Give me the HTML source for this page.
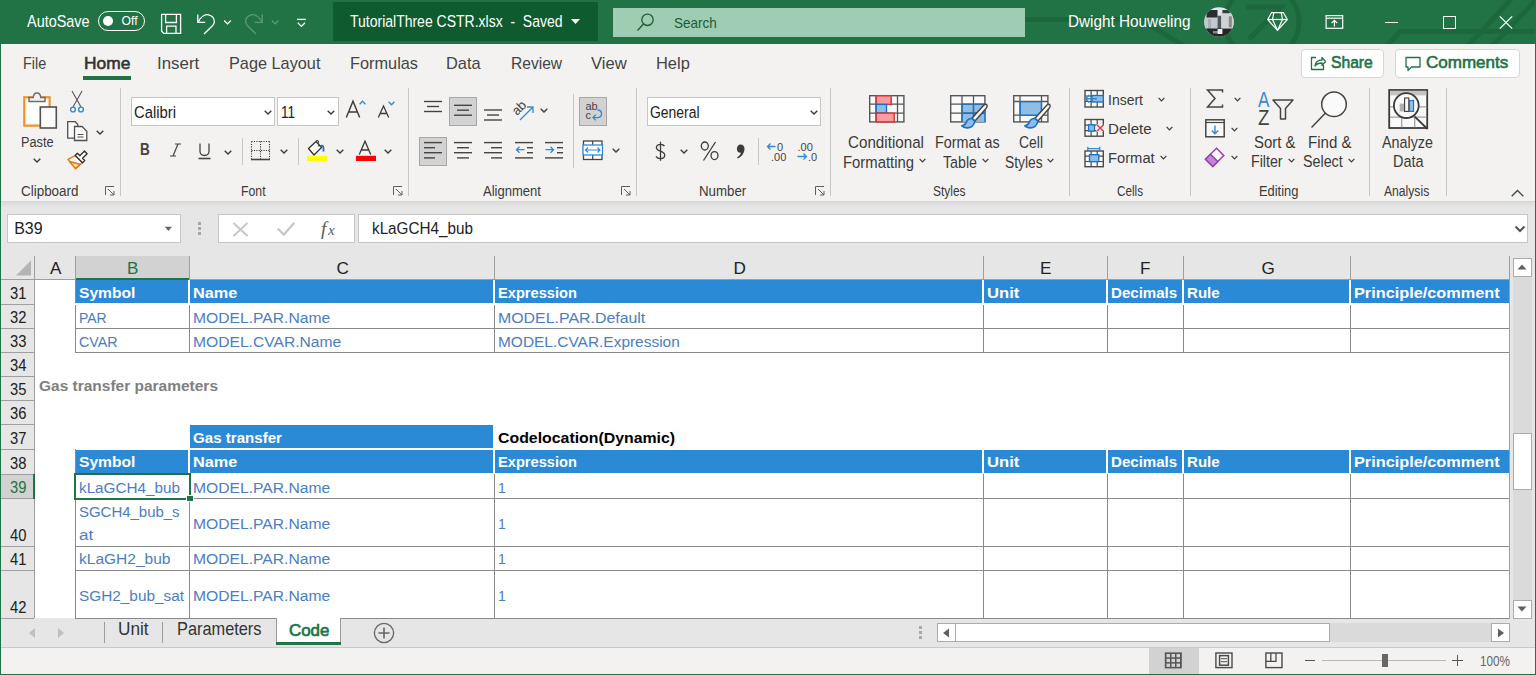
<!DOCTYPE html>
<html><head><meta charset="utf-8"><style>
html,body{margin:0;padding:0;width:1536px;height:675px;overflow:hidden;background:#fff;}
body{position:relative;font-family:"Liberation Sans", sans-serif;}
.t{position:absolute;white-space:pre;line-height:1;font-family:"Liberation Sans", sans-serif;}
svg{position:absolute;overflow:visible;}
</style></head><body>
<div style="position:absolute;left:0px;top:0px;width:1536px;height:675px;background:#f3f2f1"></div><div style="position:absolute;left:0px;top:0px;width:1536px;height:44px;background:#217346"></div><div style="position:absolute;left:1px;top:44px;width:1534px;height:157px;background:#f3f2f1"></div><div style="position:absolute;left:1px;top:201px;width:1534px;height:446px;background:#e6e6e6"></div><div style="position:absolute;left:1px;top:201px;width:1534px;height:6px;background:linear-gradient(#d6d6d6,#e6e6e6)"></div><div style="position:absolute;left:0px;top:44px;width:1px;height:631px;background:#217346"></div><div style="position:absolute;left:1535px;top:44px;width:1px;height:631px;background:#217346"></div><div style="position:absolute;left:0px;top:674px;width:1536px;height:1px;background:#217346"></div><div style="position:absolute;left:83px;top:76px;width:48px;height:4px;background:#217346"></div><div style="position:absolute;left:7px;top:214px;width:174px;height:29px;background:#fff;box-sizing:border-box;border:1px solid #c6c6c6"></div><div style="position:absolute;left:218px;top:214px;width:137px;height:29px;background:#fff;box-sizing:border-box;border:1px solid #c6c6c6"></div><div style="position:absolute;left:358px;top:214px;width:1170px;height:29px;background:#fff;box-sizing:border-box;border:1px solid #c6c6c6"></div><div style="position:absolute;left:35px;top:280px;width:1474px;height:338px;background:#fff"></div><div style="position:absolute;left:76px;top:256px;width:113px;height:23px;background:#d2d2d2"></div><div style="position:absolute;left:1px;top:475px;width:32px;height:23px;background:#d2d2d2"></div><div style="position:absolute;left:34px;top:256px;width:1px;height:24px;background:#9e9e9e"></div><div style="position:absolute;left:75px;top:256px;width:1px;height:24px;background:#9e9e9e"></div><div style="position:absolute;left:189px;top:256px;width:1px;height:24px;background:#9e9e9e"></div><div style="position:absolute;left:494px;top:256px;width:1px;height:24px;background:#9e9e9e"></div><div style="position:absolute;left:983px;top:256px;width:1px;height:24px;background:#9e9e9e"></div><div style="position:absolute;left:1107px;top:256px;width:1px;height:24px;background:#9e9e9e"></div><div style="position:absolute;left:1183px;top:256px;width:1px;height:24px;background:#9e9e9e"></div><div style="position:absolute;left:1350px;top:256px;width:1px;height:24px;background:#9e9e9e"></div><div style="position:absolute;left:1509px;top:256px;width:1px;height:24px;background:#9e9e9e"></div><div style="position:absolute;left:1px;top:279px;width:1509px;height:1px;background:#9e9e9e"></div><div style="position:absolute;left:34px;top:256px;width:1px;height:362px;background:#9e9e9e"></div><div style="position:absolute;left:1px;top:304px;width:33px;height:1px;background:#9e9e9e"></div><div style="position:absolute;left:1px;top:328px;width:33px;height:1px;background:#9e9e9e"></div><div style="position:absolute;left:1px;top:352px;width:33px;height:1px;background:#9e9e9e"></div><div style="position:absolute;left:1px;top:376px;width:33px;height:1px;background:#9e9e9e"></div><div style="position:absolute;left:1px;top:400px;width:33px;height:1px;background:#9e9e9e"></div><div style="position:absolute;left:1px;top:424px;width:33px;height:1px;background:#9e9e9e"></div><div style="position:absolute;left:1px;top:449px;width:33px;height:1px;background:#9e9e9e"></div><div style="position:absolute;left:1px;top:474px;width:33px;height:1px;background:#9e9e9e"></div><div style="position:absolute;left:1px;top:498px;width:33px;height:1px;background:#9e9e9e"></div><div style="position:absolute;left:1px;top:546px;width:33px;height:1px;background:#9e9e9e"></div><div style="position:absolute;left:1px;top:570px;width:33px;height:1px;background:#9e9e9e"></div><div style="position:absolute;left:1px;top:618px;width:33px;height:1px;background:#9e9e9e"></div><div style="position:absolute;left:76px;top:278px;width:113px;height:2px;background:#217346"></div><div style="position:absolute;left:33px;top:474px;width:2px;height:25px;background:#217346"></div><div style="position:absolute;left:75px;top:280px;width:1px;height:23px;background:#8a8a8a"></div><div style="position:absolute;left:76px;top:280px;width:112px;height:23px;background:#2b8ad6"></div><div style="position:absolute;left:190px;top:280px;width:303px;height:23px;background:#2b8ad6"></div><div style="position:absolute;left:495px;top:280px;width:487px;height:23px;background:#2b8ad6"></div><div style="position:absolute;left:984px;top:280px;width:122px;height:23px;background:#2b8ad6"></div><div style="position:absolute;left:1108px;top:280px;width:74px;height:23px;background:#2b8ad6"></div><div style="position:absolute;left:1184px;top:280px;width:165px;height:23px;background:#2b8ad6"></div><div style="position:absolute;left:1351px;top:280px;width:158px;height:23px;background:#2b8ad6"></div><div style="position:absolute;left:75px;top:305px;width:1px;height:48px;background:#8a8a8a"></div><div style="position:absolute;left:189px;top:305px;width:1px;height:48px;background:#8a8a8a"></div><div style="position:absolute;left:494px;top:305px;width:1px;height:48px;background:#8a8a8a"></div><div style="position:absolute;left:983px;top:305px;width:1px;height:48px;background:#8a8a8a"></div><div style="position:absolute;left:1107px;top:305px;width:1px;height:48px;background:#8a8a8a"></div><div style="position:absolute;left:1183px;top:305px;width:1px;height:48px;background:#8a8a8a"></div><div style="position:absolute;left:1350px;top:305px;width:1px;height:48px;background:#8a8a8a"></div><div style="position:absolute;left:1509px;top:305px;width:1px;height:48px;background:#8a8a8a"></div><div style="position:absolute;left:75px;top:328px;width:1435px;height:1px;background:#8a8a8a"></div><div style="position:absolute;left:75px;top:352px;width:1435px;height:1px;background:#8a8a8a"></div><div style="position:absolute;left:190px;top:425px;width:303px;height:23px;background:#2b8ad6"></div><div style="position:absolute;left:75px;top:449px;width:1px;height:24px;background:#8a8a8a"></div><div style="position:absolute;left:76px;top:450px;width:112px;height:23px;background:#2b8ad6"></div><div style="position:absolute;left:190px;top:450px;width:303px;height:23px;background:#2b8ad6"></div><div style="position:absolute;left:495px;top:450px;width:487px;height:23px;background:#2b8ad6"></div><div style="position:absolute;left:984px;top:450px;width:122px;height:23px;background:#2b8ad6"></div><div style="position:absolute;left:1108px;top:450px;width:74px;height:23px;background:#2b8ad6"></div><div style="position:absolute;left:1184px;top:450px;width:165px;height:23px;background:#2b8ad6"></div><div style="position:absolute;left:1351px;top:450px;width:158px;height:23px;background:#2b8ad6"></div><div style="position:absolute;left:75px;top:474px;width:1px;height:145px;background:#8a8a8a"></div><div style="position:absolute;left:189px;top:474px;width:1px;height:145px;background:#8a8a8a"></div><div style="position:absolute;left:494px;top:474px;width:1px;height:145px;background:#8a8a8a"></div><div style="position:absolute;left:983px;top:474px;width:1px;height:145px;background:#8a8a8a"></div><div style="position:absolute;left:1107px;top:474px;width:1px;height:145px;background:#8a8a8a"></div><div style="position:absolute;left:1183px;top:474px;width:1px;height:145px;background:#8a8a8a"></div><div style="position:absolute;left:1350px;top:474px;width:1px;height:145px;background:#8a8a8a"></div><div style="position:absolute;left:1509px;top:474px;width:1px;height:145px;background:#8a8a8a"></div><div style="position:absolute;left:75px;top:498px;width:1435px;height:1px;background:#8a8a8a"></div><div style="position:absolute;left:75px;top:546px;width:1435px;height:1px;background:#8a8a8a"></div><div style="position:absolute;left:75px;top:570px;width:1435px;height:1px;background:#8a8a8a"></div><div style="position:absolute;left:75px;top:618px;width:1435px;height:1px;background:#8a8a8a"></div><div style="position:absolute;left:1509px;top:256px;width:1px;height:363px;background:#9e9e9e"></div><div style="position:absolute;left:74px;top:473px;width:117px;height:27px;box-sizing:border-box;border:2px solid #217346"></div><div style="position:absolute;left:187px;top:496px;width:6px;height:5px;background:#217346;outline:1px solid #fff"></div><div style="position:absolute;left:98px;top:11px;width:47px;height:20px;box-sizing:border-box;border:1.5px solid #fff;border-radius:10px"></div><div style="position:absolute;left:103px;top:16px;width:10px;height:10px;background:#fff;border-radius:50%"></div><svg style="left:150px;top:5px" width="170" height="35" viewBox="150 5 170 35"><g fill="none" stroke="#fff" stroke-width="1.3">
<path d="M161.6 14.3H180.6V33.4H163.8L161.6 31.2z"/><path d="M165.6 14.3V22.5H176.4V14.3"/><path d="M166.6 33.4V26.2H176V33.4"/>
<path d="M197.8 14.5V22.4H205.2"/><path d="M198.2 22C201 16 205.5 14.3 208.5 14.8c4 0.6 6 4 5.8 7.2-0.1 1.6-0.8 2.8-1.8 3.8L204 34"/>
<path d="M224.2 20.5l3.3 3.4 3.3-3.4"/>
<path d="M297 19.4H305.8"/><path d="M297.8 22.8l3.6 3.6 3.6-3.6"/></g>
<g fill="none" stroke="#5e9a77" stroke-width="1.3"><path d="M262.2 14.5V22.4H254.8"/><path d="M261.8 22C259 16 254.5 14.3 251.5 14.8c-4 0.6-6 4-5.8 7.2 0.1 1.6 0.8 2.8 1.8 3.8L256 34"/>
<path d="M271.8 20.5l3.3 3.4 3.3-3.4"/></g></svg><div style="position:absolute;left:333px;top:2px;width:265px;height:39px;background:#0f5b2f"></div><svg style="left:571px;top:19px" width="9" height="5" viewBox="0 0 9 5"><path d="M0 0h9L4.5 5z" fill="#fff"/></svg><div style="position:absolute;left:613px;top:8px;width:412px;height:29px;background:#9fcdb3"></div><svg style="left:636px;top:12px" width="20" height="20" viewBox="0 0 20 20"><g fill="none" stroke="#1e5c36" stroke-width="1.3"><circle cx="11.5" cy="7.8" r="5.7"/><path d="M7.5 12L1.5 18.5"/></g></svg><svg style="left:1025px;top:0px;overflow:hidden" width="510" height="44" viewBox="1025 0 510 44"><g fill="none" stroke="#1d673d" stroke-width="5">
<path d="M1000 19.5H1140"/><path d="M1140 19.5l50 30"/><circle cx="1262" cy="22" r="37"/><path d="M1246 7h35l-32 32"/>
<path d="M1385 48l15-16.5H1540"/><path d="M1466 48L1514 -4"/><path d="M1490 48L1540 -4"/></g></svg><svg style="left:1204px;top:7px" width="30" height="30" viewBox="0 0 30 30"><defs><clipPath id="av"><circle cx="15" cy="15" r="14.7"/></clipPath></defs>
<g clip-path="url(#av)"><rect width="30" height="30" fill="#dfe8ef"/>
<rect x="0" y="9" width="14" height="17" fill="#c3c8cc"/><rect x="2.5" y="3" width="11" height="7.5" fill="#2c2c2c"/>
<rect x="13.6" y="8.7" width="3.8" height="13.5" fill="#4d5863"/>
<rect x="17.3" y="6" width="12.7" height="15" fill="#cfd2d3"/><rect x="18.4" y="3" width="7.5" height="3.2" fill="#3a3a3a"/>
<rect x="24.8" y="9.3" width="3" height="11" fill="#8a8a8a"/><rect x="4" y="12" width="3" height="12" fill="#a9aeb2"/>
<rect x="0" y="21.5" width="30" height="9" fill="#262626"/><rect x="9" y="24" width="5" height="2.5" fill="#8d8778"/>
<rect x="13.6" y="22" width="4.8" height="5" fill="#f0f0f0"/></g></svg><svg style="left:1266px;top:11px" width="24" height="21" viewBox="0 0 24 21"><g fill="none" stroke="#fff" stroke-width="1.2" stroke-linejoin="round">
<path d="M5.5 1.7h12l3.8 6.8L11.5 19.3 1.7 8.5z"/><path d="M1.7 8.5h19.6"/><path d="M7.8 1.7L6.5 8.5l5 10.8 5-10.8-1.3-6.8"/></g></svg><svg style="left:1325px;top:15px" width="19" height="15" viewBox="0 0 19 15"><g fill="none" stroke="#fff" stroke-width="1.2">
<rect x="1.1" y="0.6" width="16.6" height="12.7"/><path d="M1.1 3.2h16.6"/><path d="M9.4 11.5V5.5"/><path d="M6.6 8.2l2.8-2.8 2.8 2.8"/></g></svg><div style="position:absolute;left:1385px;top:22px;width:13px;height:1.2px;background:#fff"></div><div style="position:absolute;left:1442.5px;top:15.5px;width:13px;height:13px;box-sizing:border-box;border:1.2px solid #fff"></div><svg style="left:1499px;top:16px" width="14" height="13" viewBox="0 0 14 13"><path d="M0.8 0.3l12.4 12.4M13.2 0.3L0.8 12.7" stroke="#fff" stroke-width="1.2"/></svg><div style="position:absolute;left:120px;top:88px;width:1px;height:108px;background:#c8c6c4"></div><div style="position:absolute;left:408px;top:88px;width:1px;height:108px;background:#c8c6c4"></div><div style="position:absolute;left:636px;top:88px;width:1px;height:108px;background:#c8c6c4"></div><div style="position:absolute;left:830px;top:88px;width:1px;height:108px;background:#c8c6c4"></div><div style="position:absolute;left:1069px;top:88px;width:1px;height:108px;background:#c8c6c4"></div><div style="position:absolute;left:1190px;top:88px;width:1px;height:108px;background:#c8c6c4"></div><div style="position:absolute;left:1369px;top:88px;width:1px;height:108px;background:#c8c6c4"></div><div style="position:absolute;left:1446px;top:88px;width:1px;height:108px;background:#c8c6c4"></div><svg style="left:105px;top:186px" width="10" height="10" viewBox="0 0 10 10"><g fill="none" stroke="#605e5c" stroke-width="1"><path d="M0.5 9V0.5H9"/><path d="M3 3l6 6M9 5v4H5"/></g></svg><svg style="left:393px;top:186px" width="10" height="10" viewBox="0 0 10 10"><g fill="none" stroke="#605e5c" stroke-width="1"><path d="M0.5 9V0.5H9"/><path d="M3 3l6 6M9 5v4H5"/></g></svg><svg style="left:621px;top:186px" width="10" height="10" viewBox="0 0 10 10"><g fill="none" stroke="#605e5c" stroke-width="1"><path d="M0.5 9V0.5H9"/><path d="M3 3l6 6M9 5v4H5"/></g></svg><svg style="left:815px;top:186px" width="10" height="10" viewBox="0 0 10 10"><g fill="none" stroke="#605e5c" stroke-width="1"><path d="M0.5 9V0.5H9"/><path d="M3 3l6 6M9 5v4H5"/></g></svg><svg style="left:1511px;top:189px" width="13" height="8" viewBox="0 0 13 8"><path d="M0.7 7.3L6.5 1.5l5.8 5.8" fill="none" stroke="#444" stroke-width="1.3"/></svg><svg style="left:20px;top:90px" width="40" height="40" viewBox="0 0 40 40">
<rect x="4.2" y="7.2" width="25.5" height="28.5" fill="#fbe9c4" stroke="#e8912d" stroke-width="2"/>
<rect x="6.5" y="9.5" width="21" height="24" fill="#fff"/>
<path d="M9 11.5V7.5h4.2c0.3-3 1.8-4.5 3.8-4.5s3.5 1.5 3.8 4.5H25v4z" fill="#f3f2f1" stroke="#6e6e6e" stroke-width="1.5"/>
<rect x="20.3" y="17" width="16" height="21" fill="#fafafa" stroke="#505050" stroke-width="1.6"/></svg><svg style="left:32.5px;top:157.5px" width="8" height="5" viewBox="0 0 8 5"><path d="M0.7 0.7L4 4l3.3-3.3" fill="none" stroke="#3b3b3b" stroke-width="1.4"/></svg><svg style="left:69px;top:90px" width="16" height="23" viewBox="0 0 16 23"><g fill="none">
<path d="M3 1l9 16M13 1L4 17" stroke="#555" stroke-width="1.1"/>
<circle cx="4" cy="19.5" r="2.4" stroke="#2f8ad6" stroke-width="1.4"/><circle cx="12" cy="19.5" r="2.4" stroke="#2f8ad6" stroke-width="1.4"/></g></svg><svg style="left:66px;top:120px" width="23" height="22" viewBox="0 0 23 22"><g fill="#fafafa" stroke="#505050" stroke-width="1.3">
<path d="M1.7 1.7h7.5l2.5 2.5v14h-10z"/><path d="M8.5 6.5h7.5l4.8 4.8v9.2H8.5z"/><path d="M11.5 14.5h6M11.5 17h6" stroke-width="1"/></g></svg><svg style="left:95.5px;top:130px" width="8" height="5" viewBox="0 0 8 5"><path d="M0.7 0.7L4 4l3.3-3.3" fill="none" stroke="#3b3b3b" stroke-width="1.4"/></svg><svg style="left:62px;top:146px" width="30" height="26" viewBox="0 0 30 26">
<path d="M13.3 9.6L6 13.3l7.6 9.3 6.9-6.1z" fill="#fff" stroke="#e07a14" stroke-width="1.5" stroke-linejoin="round"/>
<path d="M7.5 15.5l10.5 2.8-4.4 4.3z" fill="#fbe08f" stroke="#e07a14" stroke-width="1.4" stroke-linejoin="round"/>
<path d="M13.2 9.4l2.2-2.2 2.5 2.5 4.6-4.6 2.6 2.6-4.6 4.6 2.2 2.2-2.2 2.2z" fill="#fff" stroke="#333" stroke-width="1.4" stroke-linejoin="round"/>
</svg><div style="position:absolute;left:131px;top:97px;width:144px;height:29px;background:#fff;box-sizing:border-box;border:1px solid #c6c6c6"></div><div style="position:absolute;left:277px;top:97px;width:62px;height:29px;background:#fff;box-sizing:border-box;border:1px solid #c6c6c6"></div><svg style="left:263.5px;top:109.5px" width="8" height="5" viewBox="0 0 8 5"><path d="M0.7 0.7L4 4l3.3-3.3" fill="none" stroke="#3b3b3b" stroke-width="1.4"/></svg><svg style="left:327px;top:109.5px" width="8" height="5" viewBox="0 0 8 5"><path d="M0.7 0.7L4 4l3.3-3.3" fill="none" stroke="#3b3b3b" stroke-width="1.4"/></svg><svg style="left:345px;top:100px" width="16" height="19" viewBox="0 0 16 19"><path d="M1.3 17.5L8 1.2l6.7 16.3M3.6 12h8.8" fill="none" stroke="#3b3b3b" stroke-width="1.4"/></svg><svg style="left:359px;top:100px" width="7" height="5" viewBox="0 0 7 5"><path d="M0.6 4.3L3.5 1.2l2.9 3.1" fill="none" stroke="#2f8ad6" stroke-width="1.3"/></svg><svg style="left:377px;top:105px" width="13" height="14" viewBox="0 0 13 14"><path d="M1.3 12.5L6.5 1l5.2 11.5M3 8.5h7" fill="none" stroke="#3b3b3b" stroke-width="1.3"/></svg><svg style="left:388px;top:101px" width="7" height="5" viewBox="0 0 7 5"><path d="M0.6 0.7L3.5 3.8l2.9-3.1" fill="none" stroke="#2f8ad6" stroke-width="1.3"/></svg><svg style="left:170px;top:143px" width="11" height="14" viewBox="0 0 11 14"><g fill="none" stroke="#444" stroke-width="1.2"><path d="M5 1h6M0 13h6M8 1L3 13"/></g></svg><svg style="left:198px;top:143px" width="13" height="17" viewBox="0 0 13 17"><g fill="none" stroke="#444" stroke-width="1.3"><path d="M2 0.5v7.5c0 3 1.7 4.5 4.5 4.5s4.5-1.5 4.5-4.5V0.5"/><path d="M0.5 15.5h12" stroke-width="1.6"/></g></svg><svg style="left:224px;top:149.5px" width="8" height="5" viewBox="0 0 8 5"><path d="M0.7 0.7L4 4l3.3-3.3" fill="none" stroke="#3b3b3b" stroke-width="1.4"/></svg><div style="position:absolute;left:242px;top:138px;width:1px;height:27px;background:#c8c6c4"></div><svg style="left:250px;top:140px" width="21" height="21" viewBox="0 0 21 21"><g fill="none" stroke="#333" stroke-width="1.1" stroke-dasharray="1.1 1.3">
<path d="M1.5 1.5H20M1.5 1.5V19M19.5 1.5V19M10.5 1.5V19M1.5 10.5H20"/></g><path d="M1 19.5h19" stroke="#444" stroke-width="1.6"/></svg><svg style="left:280px;top:149px" width="8" height="5" viewBox="0 0 8 5"><path d="M0.7 0.7L4 4l3.3-3.3" fill="none" stroke="#3b3b3b" stroke-width="1.4"/></svg><div style="position:absolute;left:298px;top:138px;width:1px;height:27px;background:#c8c6c4"></div><svg style="left:306px;top:140px" width="24" height="22" viewBox="0 0 24 22">
<path d="M2.5 8.5L10 1.5l5.5 6-7.5 7.5z" fill="#fafafa" stroke="#333" stroke-width="1.3" stroke-linejoin="round"/>
<path d="M10 1.5c0.5-1.2 2-1.2 2.5 0v5" fill="none" stroke="#555" stroke-width="1.1"/>
<path d="M14.5 6.5c1.5-1.5 3-0.8 3 1.5v3.5" fill="none" stroke="#1e6fb9" stroke-width="1.8"/>
<rect x="1" y="15.8" width="20" height="5.2" fill="#ffff00"/></svg><svg style="left:336px;top:149px" width="8" height="5" viewBox="0 0 8 5"><path d="M0.7 0.7L4 4l3.3-3.3" fill="none" stroke="#3b3b3b" stroke-width="1.4"/></svg><svg style="left:355px;top:140px" width="22" height="22" viewBox="0 0 22 22"><path d="M4.3 14.5L10 1.2l5.7 13.3M6.3 10h7.4" fill="none" stroke="#3b3b3b" stroke-width="1.3"/>
<rect x="1" y="15.8" width="20" height="5.2" fill="#ff0000"/></svg><svg style="left:384px;top:149px" width="8" height="5" viewBox="0 0 8 5"><path d="M0.7 0.7L4 4l3.3-3.3" fill="none" stroke="#3b3b3b" stroke-width="1.4"/></svg><svg style="left:424px;top:0px" width="40" height="200" viewBox="0 0 40 200"><g stroke="#444" stroke-width="1.4" fill="none"><path d="M0 101.5H18"/><path d="M3 106.5H15"/><path d="M0 111.5H18"/></g></svg><div style="position:absolute;left:449px;top:97px;width:28px;height:29px;background:#d2d2d2;box-sizing:border-box;border:1px solid #a6a6a6"></div><svg style="left:453.5px;top:0px" width="40" height="200" viewBox="0 0 40 200"><g stroke="#444" stroke-width="1.4" fill="none"><path d="M0 105.3H18"/><path d="M3 110.2H15"/><path d="M0 115.2H18"/></g></svg><svg style="left:484px;top:0px" width="40" height="200" viewBox="0 0 40 200"><g stroke="#444" stroke-width="1.4" fill="none"><path d="M0 110H18"/><path d="M3 115H15"/><path d="M0 120H18"/></g></svg><svg style="left:512px;top:99px" width="24" height="23" viewBox="0 0 24 23">
<text x="0" y="0" transform="translate(5 17) rotate(-45)" font-family="Liberation Sans" font-size="13" fill="#444">ab</text>
<path d="M8 21L20.5 8.5" stroke="#2f8ad6" stroke-width="1.3"/><path d="M15 8h6v6" fill="none" stroke="#2f8ad6" stroke-width="1.3"/></svg><svg style="left:539.5px;top:107.5px" width="8" height="5" viewBox="0 0 8 5"><path d="M0.7 0.7L4 4l3.3-3.3" fill="none" stroke="#3b3b3b" stroke-width="1.4"/></svg><div style="position:absolute;left:573px;top:94px;width:1px;height:74px;background:#c8c6c4"></div><div style="position:absolute;left:579px;top:97px;width:28px;height:29px;background:#d2d2d2;box-sizing:border-box;border:1px solid #a6a6a6"></div><svg style="left:579px;top:97px" width="28" height="29" viewBox="0 0 28 29">
<text x="6.5" y="12.5" font-family="Liberation Sans" font-size="11" fill="#444">ab</text>
<text x="6.5" y="21.5" font-family="Liberation Sans" font-size="11" fill="#444">c</text>
<path d="M18.5 13c2.5 0 4 1.2 4 3.8s-1.5 3.8-4 3.8h-4.5" fill="none" stroke="#2f8ad6" stroke-width="1.3"/>
<path d="M16.8 17.8l-2.8 2.8 2.8 2.8" fill="none" stroke="#2f8ad6" stroke-width="1.3"/></svg><div style="position:absolute;left:419px;top:137px;width:28px;height:29px;background:#d2d2d2;box-sizing:border-box;border:1px solid #a6a6a6"></div><svg style="left:424px;top:0px" width="40" height="200" viewBox="0 0 40 200"><g stroke="#444" stroke-width="1.4" fill="none"><path d="M0 142.6H18"/><path d="M0 147.7H11"/><path d="M0 152.7H18"/><path d="M0 157.9H11"/></g></svg><svg style="left:454px;top:0px" width="40" height="200" viewBox="0 0 40 200"><g stroke="#444" stroke-width="1.4" fill="none"><path d="M0 142.6H18"/><path d="M3 147.7H15"/><path d="M0 152.7H18"/><path d="M3 157.9H15"/></g></svg><svg style="left:484px;top:0px" width="40" height="200" viewBox="0 0 40 200"><g stroke="#444" stroke-width="1.4" fill="none"><path d="M0 142.6H18"/><path d="M7 147.7H18"/><path d="M0 152.7H18"/><path d="M7 157.9H18"/></g></svg><svg style="left:515px;top:0px" width="40" height="200" viewBox="0 0 40 200"><g stroke="#444" stroke-width="1.4" fill="none"><path d="M0 142.6H18"/><path d="M12 147.7H18"/><path d="M12 152.7H18"/><path d="M0 157.9H18"/></g></svg><svg style="left:515px;top:145px" width="12" height="10" viewBox="0 0 12 10"><path d="M9.5 4.7H1.5M4.5 1.7l-3 3 3 3" fill="none" stroke="#2f8ad6" stroke-width="1.3"/></svg><svg style="left:545px;top:0px" width="40" height="200" viewBox="0 0 40 200"><g stroke="#444" stroke-width="1.4" fill="none"><path d="M0 142.6H18"/><path d="M12 147.7H18"/><path d="M12 152.7H18"/><path d="M0 157.9H18"/></g></svg><svg style="left:545px;top:145px" width="12" height="10" viewBox="0 0 12 10"><path d="M0.5 4.7h8M5.5 1.7l3 3-3 3" fill="none" stroke="#2f8ad6" stroke-width="1.3"/></svg><svg style="left:582px;top:140px" width="22" height="21" viewBox="0 0 22 21">
<rect x="1.5" y="1" width="18.5" height="18.5" fill="#fff" stroke="#444" stroke-width="1.3"/>
<path d="M10.7 1v4.5M10.7 15v4.5" stroke="#444" stroke-width="1.2"/>
<rect x="1" y="5" width="19.5" height="10" fill="#fff" stroke="#2f8ad6" stroke-width="1.3"/>
<path d="M3.5 10h14.5M6 7.5L3.5 10 6 12.5M15.5 7.5L18 10l-2.5 2.5" fill="none" stroke="#2f8ad6" stroke-width="1.2"/></svg><svg style="left:612px;top:148px" width="8" height="5" viewBox="0 0 8 5"><path d="M0.7 0.7L4 4l3.3-3.3" fill="none" stroke="#3b3b3b" stroke-width="1.4"/></svg><div style="position:absolute;left:647px;top:97px;width:174px;height:29px;background:#fff;box-sizing:border-box;border:1px solid #c6c6c6"></div><svg style="left:809.5px;top:109.5px" width="8" height="5" viewBox="0 0 8 5"><path d="M0.7 0.7L4 4l3.3-3.3" fill="none" stroke="#3b3b3b" stroke-width="1.4"/></svg><svg style="left:654px;top:141px" width="13" height="21" viewBox="0 0 13 21"><path d="M10.5 5.2C9.8 4 8.4 3.3 6.5 3.3 4 3.3 2.4 4.6 2.4 6.4c0 4.5 8.3 3 8.3 7.8 0 2-1.8 3.4-4.3 3.4-2.1 0-3.6-0.8-4.4-2.2M6.5 0.8v19" fill="none" stroke="#3b3b3b" stroke-width="1.3"/></svg><svg style="left:680px;top:149px" width="8" height="5" viewBox="0 0 8 5"><path d="M0.7 0.7L4 4l3.3-3.3" fill="none" stroke="#3b3b3b" stroke-width="1.4"/></svg><svg style="left:700px;top:141px" width="20" height="20" viewBox="0 0 20 20"><g fill="none" stroke="#3b3b3b" stroke-width="1.3"><ellipse cx="4.8" cy="5" rx="3.5" ry="4"/><ellipse cx="14.5" cy="14.6" rx="3.5" ry="4"/><path d="M15.5 1L3.5 19.5"/></g></svg><svg style="left:735px;top:143px" width="11" height="17" viewBox="0 0 11 17"><path d="M5.5 1.5c2.6 0 4 1.6 4 4.3 0 4-2.6 7.8-6.8 9.8l-0.6-1.2c2.2-1.3 3.4-3 3.8-4.6-2.4 0.2-4-1.2-4-3.8 0-2.5 1.6-4.5 3.6-4.5z" fill="#3b3b3b"/></svg><div style="position:absolute;left:758px;top:138px;width:1px;height:27px;background:#c8c6c4"></div><svg style="left:765px;top:140px" width="24" height="22" viewBox="0 0 24 22">
<text x="12" y="10.5" font-family="Liberation Sans" font-size="11" fill="#444">0</text>
<text x="6" y="20.5" font-family="Liberation Sans" font-size="11" fill="#444">.00</text>
<path d="M10.5 6.5H2.5M5.5 3.5l-3 3 3 3" fill="none" stroke="#2f8ad6" stroke-width="1.3"/></svg><svg style="left:796px;top:140px" width="24" height="22" viewBox="0 0 24 22">
<text x="1.5" y="10.5" font-family="Liberation Sans" font-size="11" fill="#444">.00</text>
<text x="12" y="20.5" font-family="Liberation Sans" font-size="11" fill="#444">.0</text>
<path d="M1.5 16.5h9M7.5 13.5l3 3-3 3" fill="none" stroke="#2f8ad6" stroke-width="1.3"/></svg><svg style="left:869px;top:95px" width="36" height="28" viewBox="0 0 36 28">
<rect x="0.7" y="0.7" width="34.2" height="26.2" fill="#fafafa" stroke="#555" stroke-width="1.4"/>
<path d="M7 0.7v26.2M28.5 0.7v26.2M0.7 9.2h34.2M0.7 18.2h34.2" stroke="#555" stroke-width="1.3"/>
<rect x="7.2" y="0.8" width="15" height="8.6" fill="#f99ca0" stroke="#d9302f" stroke-width="1.4"/>
<rect x="7.2" y="9.4" width="10.3" height="8.6" fill="#8ebee8" stroke="#1a6fc4" stroke-width="1.4"/>
<rect x="7.2" y="18.1" width="18" height="8.8" fill="#f99ca0" stroke="#d9302f" stroke-width="1.4"/></svg><svg style="left:950px;top:95px" width="36" height="28" viewBox="0 0 36 28">
<rect x="0.7" y="0.7" width="34.2" height="26.2" fill="#fafafa" stroke="#555" stroke-width="1.4"/>
<rect x="12" y="9.2" width="23" height="17.7" fill="#8ebee8"/>
<path d="M12 0.7v26.2M23.5 0.7v26.2M0.7 9.2h34.2M0.7 18.2h34.2" stroke="#555" stroke-width="1.3"/>
<path d="M12 9.2h23M12 9.2v17.7M23.5 9.2v17.7M12 18.2h23M34.9 9.2v17.7" stroke="#1a6fc4" stroke-width="1.3"/></svg><svg style="left:957px;top:103px" width="32" height="26" viewBox="0 0 32 26">
<path d="M29.5 1.5c1.2 0.8 0.8 2.5-0.5 4L18 18l-3-2.8L26.5 2.5c1-1 2-1.5 3-1z" fill="#fafafa" stroke="#444" stroke-width="1.4"/>
<path d="M14.8 15.5l3 2.6c-0.5 4.5-4.2 7-8 6.8-2.5-0.1-4-1-5-2 2.2-0.2 3.5-1.6 4.5-3.8 1-2.2 2.8-3.8 5.5-3.6z" fill="#8ebee8" stroke="#1a6fc4" stroke-width="1.6" stroke-linejoin="round"/></svg><svg style="left:1013px;top:95px" width="36" height="28" viewBox="0 0 36 28">
<rect x="0.7" y="0.7" width="34.2" height="26.2" fill="#fafafa" stroke="#555" stroke-width="1.4"/>
<path d="M7 0.7v26.2M28.5 0.7v26.2M0.7 6.5h34.2M0.7 20.2h34.2" stroke="#555" stroke-width="1.3"/>
<rect x="7.2" y="6.7" width="21.2" height="13.5" fill="#8ebee8" stroke="#1a6fc4" stroke-width="1.4"/></svg><svg style="left:1020px;top:103px" width="32" height="26" viewBox="0 0 32 26">
<path d="M29.5 1.5c1.2 0.8 0.8 2.5-0.5 4L18 18l-3-2.8L26.5 2.5c1-1 2-1.5 3-1z" fill="#fafafa" stroke="#444" stroke-width="1.4"/>
<path d="M14.8 15.5l3 2.6c-0.5 4.5-4.2 7-8 6.8-2.5-0.1-4-1-5-2 2.2-0.2 3.5-1.6 4.5-3.8 1-2.2 2.8-3.8 5.5-3.6z" fill="#8ebee8" stroke="#1a6fc4" stroke-width="1.6" stroke-linejoin="round"/></svg><svg style="left:919px;top:157.5px" width="7" height="5" viewBox="0 0 8 5"><path d="M0.7 0.7L4 4l3.3-3.3" fill="none" stroke="#3b3b3b" stroke-width="1.4"/></svg><svg style="left:982px;top:157.5px" width="7" height="5" viewBox="0 0 8 5"><path d="M0.7 0.7L4 4l3.3-3.3" fill="none" stroke="#3b3b3b" stroke-width="1.4"/></svg><svg style="left:1047px;top:157.5px" width="7" height="5" viewBox="0 0 8 5"><path d="M0.7 0.7L4 4l3.3-3.3" fill="none" stroke="#3b3b3b" stroke-width="1.4"/></svg><svg style="left:1080px;top:86px" width="30" height="84" viewBox="1080 86 30 84">
<rect x="1085" y="90.5" width="18.299999999999955" height="16.5" fill="#fafafa" stroke="#4a4a4a" stroke-width="1.4"/><path d="M1091.1 90.5V107M1097.2 90.5V107M1085 96.0H1103.3M1085 101.5H1103.3" stroke="#4a4a4a" stroke-width="1.2"/>
<rect x="1092" y="95.5" width="11.3" height="6.5" fill="#8ebee8" stroke="#1a6fc4" stroke-width="1.3"/>
<path d="M1097 98.8H1085.5M1089.3 95l-3.8 3.8 3.8 3.8" fill="none" stroke="#2f8ad6" stroke-width="1.5"/>
<rect x="1085" y="119.5" width="18.299999999999955" height="16.69999999999999" fill="#fafafa" stroke="#4a4a4a" stroke-width="1.4"/><path d="M1091.1 119.5V136.2M1097.2 119.5V136.2M1085 125.1H1103.3M1085 130.6H1103.3" stroke="#4a4a4a" stroke-width="1.2"/>
<circle cx="1100" cy="128" r="4.5" fill="#f3f2f1"/>
<rect x="1088.5" y="124.8" width="6" height="6.3" fill="#8ebee8" stroke="#1a6fc4" stroke-width="1.3"/>
<path d="M1097.2 125l6 6M1103.2 125l-6 6" stroke="#e8383d" stroke-width="1.4"/>
<path d="M1087.5 148.6H1100M1087.8 146.8v3.6M1099.7 146.8v3.6" stroke="#2f8ad6" stroke-width="1.3"/>
<rect x="1085" y="151" width="18.299999999999955" height="15.699999999999989" fill="#fafafa" stroke="#4a4a4a" stroke-width="1.4"/><path d="M1091.1 151V166.7M1097.2 151V166.7M1085 156.2H1103.3M1085 161.5H1103.3" stroke="#4a4a4a" stroke-width="1.2"/>
<rect x="1089.5" y="154.7" width="9.3" height="7" fill="#8ebee8" stroke="#1a6fc4" stroke-width="1.3"/>
</svg><svg style="left:1157.5px;top:96.5px" width="7" height="5" viewBox="0 0 8 5"><path d="M0.7 0.7L4 4l3.3-3.3" fill="none" stroke="#3b3b3b" stroke-width="1.4"/></svg><svg style="left:1166px;top:125.5px" width="7" height="5" viewBox="0 0 8 5"><path d="M0.7 0.7L4 4l3.3-3.3" fill="none" stroke="#3b3b3b" stroke-width="1.4"/></svg><svg style="left:1159.5px;top:154.5px" width="7" height="5" viewBox="0 0 8 5"><path d="M0.7 0.7L4 4l3.3-3.3" fill="none" stroke="#3b3b3b" stroke-width="1.4"/></svg><svg style="left:1206px;top:89px" width="18" height="20" viewBox="0 0 18 20"><path d="M16.5 3.5V1H1.5l7.5 8.5-7.5 8.5h15v-2.5" fill="none" stroke="#444" stroke-width="1.5"/></svg><svg style="left:1234px;top:96.5px" width="7" height="5" viewBox="0 0 8 5"><path d="M0.7 0.7L4 4l3.3-3.3" fill="none" stroke="#3b3b3b" stroke-width="1.4"/></svg><svg style="left:1205px;top:119px" width="20" height="19" viewBox="0 0 20 19"><rect x="0.8" y="0.8" width="18.4" height="17" fill="#fafafa" stroke="#444" stroke-width="1.5"/>
<path d="M0.8 3.5h18.4" stroke="#444" stroke-width="1.2"/><path d="M10 6.5v8M6.8 11.5l3.2 3.2 3.2-3.2" fill="none" stroke="#2f8ad6" stroke-width="1.4"/></svg><svg style="left:1231px;top:126.5px" width="7" height="5" viewBox="0 0 8 5"><path d="M0.7 0.7L4 4l3.3-3.3" fill="none" stroke="#3b3b3b" stroke-width="1.4"/></svg><svg style="left:1204px;top:147px" width="21" height="20" viewBox="0 0 21 20"><path d="M12.5 1.2l7.3 7.3-11 11L1.5 12.2z" fill="#fafafa" stroke="#9b3fb0" stroke-width="1.5"/>
<path d="M1.5 12.2l5-5 7.3 7.3-5 5z" fill="#c583d6" stroke="#9b3fb0" stroke-width="1.5"/></svg><svg style="left:1231px;top:155px" width="7" height="5" viewBox="0 0 8 5"><path d="M0.7 0.7L4 4l3.3-3.3" fill="none" stroke="#3b3b3b" stroke-width="1.4"/></svg><svg style="left:1272px;top:99px" width="22" height="21" viewBox="0 0 22 21"><path d="M1 1h20l-7.5 8.5V20h-5V9.5z" fill="none" stroke="#444" stroke-width="1.5" stroke-linejoin="round"/></svg><svg style="left:1288px;top:157.5px" width="7" height="5" viewBox="0 0 8 5"><path d="M0.7 0.7L4 4l3.3-3.3" fill="none" stroke="#3b3b3b" stroke-width="1.4"/></svg><svg style="left:1310px;top:90px" width="40" height="40" viewBox="0 0 40 40"><circle cx="24" cy="14.3" r="12.3" fill="#fafafa" stroke="#444" stroke-width="1.5"/><path d="M15.5 23L1.5 37.5" stroke="#444" stroke-width="1.5"/></svg><svg style="left:1348px;top:157.5px" width="7" height="5" viewBox="0 0 8 5"><path d="M0.7 0.7L4 4l3.3-3.3" fill="none" stroke="#3b3b3b" stroke-width="1.4"/></svg><svg style="left:1380px;top:84px" width="52" height="48" viewBox="1380 84 52 48">
<rect x="1389.2" y="90" width="38" height="38" fill="#fafafa" stroke="#3b3b3b" stroke-width="1.8"/>
<rect x="1390" y="90.8" width="36.4" height="4.6" fill="#c4c4c4"/>
<path d="M1390 106.8H1426.4M1390 117.2H1426.4M1401.7 95.5V127.2M1414.7 95.5V127.2" stroke="#a0a0a0" stroke-width="1.3"/>
<circle cx="1406.3" cy="105.6" r="12.4" fill="#fafafa" stroke="#3b3b3b" stroke-width="1.8"/>
<path d="M1414.7 116.6L1427.5 129" stroke="#3b3b3b" stroke-width="1.8"/>
<rect x="1399.7" y="103.6" width="4.4" height="7.8" fill="#b0b0b0"/>
<rect x="1404.6" y="98" width="4.2" height="13.4" fill="#fafafa" stroke="#3b3b3b" stroke-width="1.1"/>
<rect x="1409.4" y="100.5" width="4.2" height="10.9" fill="#8ebee8" stroke="#1a6fc4" stroke-width="1.1"/>
</svg><div style="position:absolute;left:1301px;top:49px;width:83px;height:29px;background:#fff;box-sizing:border-box;border:1px solid #d6d6d6;border-radius:4px"></div><svg style="left:1310px;top:55px" width="16" height="16" viewBox="0 0 16 16"><g fill="none" stroke="#217346" stroke-width="1.3" stroke-linejoin="round">
<path d="M6 2.5H1.5v12h12V10"/><path d="M5 11c0.5-4 3-6 7-6V2.5l3.5 4-3.5 4V8c-3 0-5.5 1-7 3z"/></g></svg><div style="position:absolute;left:1395px;top:49px;width:125px;height:29px;background:#fff;box-sizing:border-box;border:1px solid #d6d6d6;border-radius:4px"></div><svg style="left:1405px;top:56px" width="16" height="16" viewBox="0 0 16 16"><path d="M1 1.5h14v9.5H6.5L3 14.5V11H1z" fill="none" stroke="#217346" stroke-width="1.3" stroke-linejoin="round"/></svg><svg style="left:164px;top:226px" width="9" height="6" viewBox="0 0 9 6"><path d="M0.8 0.8h7.2L4.4 5z" fill="#666"/></svg><div style="position:absolute;left:198px;top:222px;width:3px;height:3px;background:#a6a6a6"></div><div style="position:absolute;left:198px;top:227px;width:3px;height:3px;background:#a6a6a6"></div><div style="position:absolute;left:198px;top:232px;width:3px;height:3px;background:#a6a6a6"></div><svg style="left:232px;top:221px" width="18" height="17" viewBox="0 0 18 17"><path d="M1.5 2l14 13M15.5 2l-14 13" stroke="#c6c6c6" stroke-width="1.8"/></svg><svg style="left:276px;top:221px" width="20" height="17" viewBox="0 0 20 17"><path d="M1.8 7.5l6 6.2L18.3 1.8" fill="none" stroke="#c6c6c6" stroke-width="2.2"/></svg><svg style="left:318px;top:216px" width="24" height="24" viewBox="0 0 24 24"><text x="3" y="18.5" font-family="Liberation Serif" font-style="italic" font-size="19" fill="#5a5a5a">f</text>
<text x="10" y="18.5" font-family="Liberation Serif" font-style="italic" font-size="15" fill="#5a5a5a">x</text></svg><svg style="left:1514px;top:225px" width="12" height="8" viewBox="0 0 12 8"><path d="M1.5 1.5l4.5 4.5 4.5-4.5" fill="none" stroke="#555" stroke-width="2"/></svg><svg style="left:15px;top:260px" width="17" height="16" viewBox="0 0 17 16"><path d="M16 0.5V15.5H1z" fill="#b4b4b4"/></svg><div style="position:absolute;left:1513px;top:277px;width:19px;height:323px;background:#dadada"></div><div style="position:absolute;left:1513px;top:258px;width:19px;height:19px;background:#fff;box-sizing:border-box;border:1px solid #ababab"></div><svg style="left:1517px;top:263px" width="10" height="7" viewBox="0 0 10 7"><path d="M0.5 6.5L5 1.5l4.5 5z" fill="#606060"/></svg><div style="position:absolute;left:1513px;top:433px;width:19px;height:57px;background:#fff;box-sizing:border-box;border:1px solid #ababab"></div><div style="position:absolute;left:1513px;top:600px;width:19px;height:19px;background:#fff;box-sizing:border-box;border:1px solid #ababab"></div><svg style="left:1517px;top:606px" width="10" height="7" viewBox="0 0 10 7"><path d="M0.5 0.5L5 5.5l4.5-5z" fill="#606060"/></svg><div style="position:absolute;left:1px;top:647px;width:1534px;height:1px;background:#c8c8c8"></div><div style="position:absolute;left:1px;top:648px;width:1534px;height:26px;background:#f3f2f1"></div><svg style="left:28px;top:627px" width="8" height="12" viewBox="0 0 8 12"><path d="M7 1v10L1 6z" fill="#c0c0c0"/></svg><svg style="left:57px;top:627px" width="8" height="12" viewBox="0 0 8 12"><path d="M1 1v10l6-5z" fill="#c0c0c0"/></svg><div style="position:absolute;left:104px;top:622px;width:1px;height:21px;background:#9a9a9a"></div><div style="position:absolute;left:162px;top:622px;width:1px;height:21px;background:#9a9a9a"></div><div style="position:absolute;left:276px;top:618px;width:65px;height:27px;background:#fff;box-sizing:border-box;border:1px solid #9a9a9a;border-top:none"></div><div style="position:absolute;left:276px;top:642px;width:65px;height:2.5px;background:#217346"></div><svg style="left:373px;top:622px" width="22" height="22" viewBox="0 0 22 22"><circle cx="11" cy="11" r="9.6" fill="none" stroke="#666" stroke-width="1.3"/><path d="M11 5.5v11M5.5 11h11" stroke="#666" stroke-width="1.6"/></svg><div style="position:absolute;left:919px;top:626px;width:3px;height:3px;background:#a8a8a8"></div><div style="position:absolute;left:919px;top:631px;width:3px;height:3px;background:#a8a8a8"></div><div style="position:absolute;left:919px;top:636px;width:3px;height:3px;background:#a8a8a8"></div><div style="position:absolute;left:937px;top:623px;width:1272px;height:19px;background:transparent"></div><div style="position:absolute;left:956px;top:623px;width:553px;height:19px;background:#dadada"></div><div style="position:absolute;left:937px;top:623px;width:19px;height:19px;background:#fff;box-sizing:border-box;border:1px solid #ababab"></div><svg style="left:942px;top:628px" width="8" height="10" viewBox="0 0 8 10"><path d="M7 0.5v9L1 5z" fill="#606060"/></svg><div style="position:absolute;left:955px;top:623px;width:375px;height:19px;background:#fff;box-sizing:border-box;border:1px solid #ababab"></div><div style="position:absolute;left:1491px;top:623px;width:19px;height:19px;background:#fff;box-sizing:border-box;border:1px solid #ababab"></div><svg style="left:1497px;top:628px" width="8" height="10" viewBox="0 0 8 10"><path d="M1 0.5v9L7 5z" fill="#606060"/></svg><div style="position:absolute;left:1149px;top:648px;width:50px;height:26px;background:#d2d2d2"></div><svg style="left:1164px;top:652px" width="18" height="17" viewBox="0 0 18 17"><rect x="0.8" y="0.4" width="17" height="16" fill="#555"/><g fill="#d2d2d2">
<rect x="2.5" y="2" width="3.5" height="3.3"/><rect x="7.5" y="2" width="3.5" height="3.3"/><rect x="12.5" y="2" width="3.5" height="3.3"/>
<rect x="2.5" y="6.8" width="3.5" height="3.3"/><rect x="7.5" y="6.8" width="3.5" height="3.3"/><rect x="12.5" y="6.8" width="3.5" height="3.3"/>
<rect x="2.5" y="11.6" width="3.5" height="3.3"/><rect x="7.5" y="11.6" width="3.5" height="3.3"/><rect x="12.5" y="11.6" width="3.5" height="3.3"/></g></svg><svg style="left:1210px;top:648px" width="80" height="24" viewBox="1210 648 80 24"><g fill="none" stroke="#4a4a4a">
<rect x="1215.9" y="653" width="16.1" height="14.6" stroke-width="1.4"/><rect x="1219.6" y="655.6" width="8.8" height="9.6" stroke-width="1.5"/>
<path d="M1221 658.7h6M1221 661.7h6" stroke-width="1"/>
<rect x="1265.9" y="653" width="16.1" height="14.6" stroke-width="1.4"/><path d="M1265.9 661.4H1276V653M1270.8 653V661.4" stroke-width="1.3"/></g></svg><div style="position:absolute;left:1305px;top:660px;width:10px;height:1.3px;background:#555"></div><div style="position:absolute;left:1322px;top:660px;width:124px;height:1px;background:#b8b8b8"></div><div style="position:absolute;left:1382px;top:654px;width:6px;height:13px;background:#666"></div><div style="position:absolute;left:1452px;top:660px;width:11px;height:1.3px;background:#555"></div><div style="position:absolute;left:1456.8px;top:655px;width:1.3px;height:11px;background:#555"></div>
<div class="t" style="left:23.1px;top:55.22px;font-size:17.39px;color:#444444;font-weight:400;transform:scaleX(0.8286);transform-origin:0 0;">File</div><div class="t" style="left:83.5px;top:55.22px;font-size:17.39px;color:#333333;font-weight:400;transform:scaleX(0.9987);transform-origin:0 0;-webkit-text-stroke:0.6px #333333;">Home</div><div class="t" style="left:157.3px;top:55.22px;font-size:17.39px;color:#444444;font-weight:400;transform:scaleX(0.9708);transform-origin:0 0;">Insert</div><div class="t" style="left:228.6px;top:55.22px;font-size:17.39px;color:#444444;font-weight:400;transform:scaleX(0.9367);transform-origin:0 0;">Page Layout</div><div class="t" style="left:349.7px;top:55.22px;font-size:17.39px;color:#444444;font-weight:400;transform:scaleX(0.9389);transform-origin:0 0;">Formulas</div><div class="t" style="left:446.4px;top:55.22px;font-size:17.39px;color:#444444;font-weight:400;transform:scaleX(0.9427);transform-origin:0 0;">Data</div><div class="t" style="left:510.8px;top:55.22px;font-size:17.39px;color:#444444;font-weight:400;transform:scaleX(0.8967);transform-origin:0 0;">Review</div><div class="t" style="left:591px;top:55.22px;font-size:17.39px;color:#444444;font-weight:400;transform:scaleX(0.9556);transform-origin:0 0;">View</div><div class="t" style="left:655.5px;top:55.22px;font-size:17.39px;color:#444444;font-weight:400;transform:scaleX(0.9459);transform-origin:0 0;">Help</div><div class="t" style="left:14.2px;top:221.45px;font-size:15.94px;color:#222;font-weight:400;">B39</div><div class="t" style="left:372.4px;top:221.45px;font-size:15.94px;color:#222;font-weight:400;transform:scaleX(0.9570);transform-origin:0 0;">kLaGCH4_bub</div><div class="t" style="left:50px;top:260.16px;font-size:17.1px;color:#212121;font-weight:400;">A</div><div class="t" style="left:127px;top:260.16px;font-size:17.1px;color:#217346;font-weight:400;">B</div><div class="t" style="left:336.5px;top:260.16px;font-size:17.1px;color:#212121;font-weight:400;">C</div><div class="t" style="left:733.5px;top:260.16px;font-size:17.1px;color:#212121;font-weight:400;">D</div><div class="t" style="left:1040px;top:260.16px;font-size:17.1px;color:#212121;font-weight:400;">E</div><div class="t" style="left:1140px;top:260.16px;font-size:17.1px;color:#212121;font-weight:400;">F</div><div class="t" style="left:1261.5px;top:260.16px;font-size:17.1px;color:#212121;font-weight:400;">G</div><div class="t" style="left:10px;top:284.56px;font-size:17.1px;color:#212121;font-weight:400;transform:scaleX(0.8624);transform-origin:0 0;">31</div><div class="t" style="left:10px;top:308.56px;font-size:17.1px;color:#212121;font-weight:400;transform:scaleX(0.8624);transform-origin:0 0;">32</div><div class="t" style="left:10px;top:332.56px;font-size:17.1px;color:#212121;font-weight:400;transform:scaleX(0.8624);transform-origin:0 0;">33</div><div class="t" style="left:10px;top:356.56px;font-size:17.1px;color:#212121;font-weight:400;transform:scaleX(0.8624);transform-origin:0 0;">34</div><div class="t" style="left:10px;top:380.56px;font-size:17.1px;color:#212121;font-weight:400;transform:scaleX(0.8624);transform-origin:0 0;">35</div><div class="t" style="left:10px;top:404.56px;font-size:17.1px;color:#212121;font-weight:400;transform:scaleX(0.8624);transform-origin:0 0;">36</div><div class="t" style="left:10px;top:429.56px;font-size:17.1px;color:#212121;font-weight:400;transform:scaleX(0.8624);transform-origin:0 0;">37</div><div class="t" style="left:10px;top:454.56px;font-size:17.1px;color:#212121;font-weight:400;transform:scaleX(0.8624);transform-origin:0 0;">38</div><div class="t" style="left:10px;top:478.56px;font-size:17.1px;color:#217346;font-weight:400;transform:scaleX(0.8624);transform-origin:0 0;">39</div><div class="t" style="left:10px;top:526.57px;font-size:17.1px;color:#212121;font-weight:400;transform:scaleX(0.8624);transform-origin:0 0;">40</div><div class="t" style="left:10px;top:550.57px;font-size:17.1px;color:#212121;font-weight:400;transform:scaleX(0.8624);transform-origin:0 0;">41</div><div class="t" style="left:10px;top:598.57px;font-size:17.1px;color:#212121;font-weight:400;transform:scaleX(0.8624);transform-origin:0 0;">42</div><div class="t" style="left:78.5px;top:284.53px;font-size:15.5px;color:#fff;font-weight:700;transform:scaleX(1.0074);transform-origin:0 0;">Symbol</div><div class="t" style="left:192.5px;top:284.53px;font-size:15.5px;color:#fff;font-weight:700;transform:scaleX(1.0517);transform-origin:0 0;">Name</div><div class="t" style="left:497.5px;top:284.53px;font-size:15.5px;color:#fff;font-weight:700;transform:scaleX(0.9442);transform-origin:0 0;">Expression</div><div class="t" style="left:986.5px;top:284.53px;font-size:15.5px;color:#fff;font-weight:700;transform:scaleX(1.0716);transform-origin:0 0;">Unit</div><div class="t" style="left:1110.5px;top:284.53px;font-size:15.5px;color:#fff;font-weight:700;transform:scaleX(0.9724);transform-origin:0 0;">Decimals</div><div class="t" style="left:1186.5px;top:284.53px;font-size:15.5px;color:#fff;font-weight:700;transform:scaleX(0.9734);transform-origin:0 0;">Rule</div><div class="t" style="left:1353.5px;top:284.53px;font-size:15.5px;color:#fff;font-weight:700;transform:scaleX(1.0506);transform-origin:0 0;">Principle/comment</div><div class="t" style="left:78.5px;top:309.62px;font-size:15.5px;color:#4a7ebf;font-weight:400;transform:scaleX(0.9013);transform-origin:0 0;">PAR</div><div class="t" style="left:192.5px;top:309.62px;font-size:15.5px;color:#4a7ebf;font-weight:400;transform:scaleX(1.0102);transform-origin:0 0;">MODEL.PAR.Name</div><div class="t" style="left:497.5px;top:309.62px;font-size:15.5px;color:#4a7ebf;font-weight:400;transform:scaleX(1.0259);transform-origin:0 0;">MODEL.PAR.Default</div><div class="t" style="left:78.5px;top:333.62px;font-size:15.5px;color:#4a7ebf;font-weight:400;transform:scaleX(0.9208);transform-origin:0 0;">CVAR</div><div class="t" style="left:192.5px;top:333.62px;font-size:15.5px;color:#4a7ebf;font-weight:400;transform:scaleX(1.0088);transform-origin:0 0;">MODEL.CVAR.Name</div><div class="t" style="left:497.5px;top:333.62px;font-size:15.5px;color:#4a7ebf;font-weight:400;transform:scaleX(0.9971);transform-origin:0 0;">MODEL.CVAR.Expression</div><div class="t" style="left:38.5px;top:377.82px;font-size:15.5px;color:#7f7f7f;font-weight:700;transform:scaleX(0.9988);transform-origin:0 0;">Gas transfer parameters</div><div class="t" style="left:192.5px;top:429.62px;font-size:15.5px;color:#fff;font-weight:700;transform:scaleX(0.9745);transform-origin:0 0;">Gas transfer</div><div class="t" style="left:497.5px;top:429.62px;font-size:15.5px;color:#000;font-weight:700;transform:scaleX(1.0231);transform-origin:0 0;">Codelocation(Dynamic)</div><div class="t" style="left:78.5px;top:453.93px;font-size:15.5px;color:#fff;font-weight:700;transform:scaleX(1.0074);transform-origin:0 0;">Symbol</div><div class="t" style="left:192.5px;top:453.93px;font-size:15.5px;color:#fff;font-weight:700;transform:scaleX(1.0517);transform-origin:0 0;">Name</div><div class="t" style="left:497.5px;top:453.93px;font-size:15.5px;color:#fff;font-weight:700;transform:scaleX(0.9442);transform-origin:0 0;">Expression</div><div class="t" style="left:986.5px;top:453.93px;font-size:15.5px;color:#fff;font-weight:700;transform:scaleX(1.0716);transform-origin:0 0;">Unit</div><div class="t" style="left:1110.5px;top:453.93px;font-size:15.5px;color:#fff;font-weight:700;transform:scaleX(0.9724);transform-origin:0 0;">Decimals</div><div class="t" style="left:1186.5px;top:453.93px;font-size:15.5px;color:#fff;font-weight:700;transform:scaleX(0.9734);transform-origin:0 0;">Rule</div><div class="t" style="left:1353.5px;top:453.93px;font-size:15.5px;color:#fff;font-weight:700;transform:scaleX(1.0506);transform-origin:0 0;">Principle/comment</div><div class="t" style="left:78.5px;top:479.62px;font-size:15.5px;color:#4a7ebf;font-weight:400;transform:scaleX(0.9849);transform-origin:0 0;">kLaGCH4_bub</div><div class="t" style="left:192.5px;top:479.62px;font-size:15.5px;color:#4a7ebf;font-weight:400;transform:scaleX(1.0102);transform-origin:0 0;">MODEL.PAR.Name</div><div class="t" style="left:497.5px;top:479.62px;font-size:15.5px;color:#4a7ebf;font-weight:400;transform:scaleX(0.9043);transform-origin:0 0;">1</div><div class="t" style="left:78.5px;top:503.82px;font-size:15.5px;color:#4a7ebf;font-weight:400;transform:scaleX(0.9648);transform-origin:0 0;">SGCH4_bub_s</div><div class="t" style="left:192.5px;top:516.03px;font-size:15.5px;color:#4a7ebf;font-weight:400;transform:scaleX(1.0102);transform-origin:0 0;">MODEL.PAR.Name</div><div class="t" style="left:497.5px;top:516.03px;font-size:15.5px;color:#4a7ebf;font-weight:400;transform:scaleX(0.9043);transform-origin:0 0;">1</div><div class="t" style="left:78.5px;top:527.12px;font-size:15.5px;color:#4a7ebf;font-weight:400;transform:scaleX(1.0976);transform-origin:0 0;">at</div><div class="t" style="left:78.5px;top:551.33px;font-size:15.5px;color:#4a7ebf;font-weight:400;transform:scaleX(1.0006);transform-origin:0 0;">kLaGH2_bub</div><div class="t" style="left:192.5px;top:551.33px;font-size:15.5px;color:#4a7ebf;font-weight:400;transform:scaleX(1.0102);transform-origin:0 0;">MODEL.PAR.Name</div><div class="t" style="left:497.5px;top:551.33px;font-size:15.5px;color:#4a7ebf;font-weight:400;transform:scaleX(0.9043);transform-origin:0 0;">1</div><div class="t" style="left:78.5px;top:587.53px;font-size:15.5px;color:#4a7ebf;font-weight:400;transform:scaleX(0.9906);transform-origin:0 0;">SGH2_bub_sat</div><div class="t" style="left:192.5px;top:587.53px;font-size:15.5px;color:#4a7ebf;font-weight:400;transform:scaleX(1.0102);transform-origin:0 0;">MODEL.PAR.Name</div><div class="t" style="left:497.5px;top:587.53px;font-size:15.5px;color:#4a7ebf;font-weight:400;transform:scaleX(0.9043);transform-origin:0 0;">1</div><div class="t" style="left:27.1px;top:14.05px;font-size:15.94px;color:#ffffff;font-weight:400;transform:scaleX(0.9056);transform-origin:0 0;">AutoSave</div><div class="t" style="left:121.6px;top:15.16px;font-size:12.17px;color:#ffffff;font-weight:400;transform:scaleX(1.0000);transform-origin:0 0;">Off</div><div class="t" style="left:350px;top:13.75px;font-size:15.94px;color:#ffffff;font-weight:400;transform:scaleX(0.8778);transform-origin:0 0;">TutorialThree CSTR.xlsx  -  Saved</div><div class="t" style="left:673.6px;top:15.94px;font-size:14.78px;color:#1c5a35;font-weight:400;transform:scaleX(0.9125);transform-origin:0 0;">Search</div><div class="t" style="left:1067.5px;top:14.26px;font-size:16.52px;color:#ffffff;font-weight:400;transform:scaleX(0.9266);transform-origin:0 0;">Dwight Houweling</div><div class="t" style="left:21.3px;top:183.06px;font-size:15.22px;color:#3b3a39;font-weight:400;transform:scaleX(0.8827);transform-origin:0 0;">Clipboard</div><div class="t" style="left:241.2px;top:183.06px;font-size:15.22px;color:#3b3a39;font-weight:400;transform:scaleX(0.8078);transform-origin:0 0;">Font</div><div class="t" style="left:483px;top:183.06px;font-size:15.22px;color:#3b3a39;font-weight:400;transform:scaleX(0.8569);transform-origin:0 0;">Alignment</div><div class="t" style="left:699.4px;top:183.06px;font-size:15.22px;color:#3b3a39;font-weight:400;transform:scaleX(0.8737);transform-origin:0 0;">Number</div><div class="t" style="left:933px;top:183.06px;font-size:15.22px;color:#3b3a39;font-weight:400;transform:scaleX(0.7864);transform-origin:0 0;">Styles</div><div class="t" style="left:1116.7px;top:183.06px;font-size:15.22px;color:#3b3a39;font-weight:400;transform:scaleX(0.7686);transform-origin:0 0;">Cells</div><div class="t" style="left:1259.3px;top:183.06px;font-size:15.22px;color:#3b3a39;font-weight:400;transform:scaleX(0.8465);transform-origin:0 0;">Editing</div><div class="t" style="left:1384.4px;top:183.06px;font-size:15.22px;color:#3b3a39;font-weight:400;transform:scaleX(0.7976);transform-origin:0 0;">Analysis</div><div class="t" style="left:20.7px;top:134.88px;font-size:14.49px;color:#3b3a39;font-weight:400;transform:scaleX(0.8800);transform-origin:0 0;">Paste</div><div class="t" style="left:134.2px;top:104.65px;font-size:15.94px;color:#222;font-weight:400;transform:scaleX(0.9320);transform-origin:0 0;">Calibri</div><div class="t" style="left:280.5px;top:104.65px;font-size:15.94px;color:#222;font-weight:400;transform:scaleX(0.8521);transform-origin:0 0;">11</div><div class="t" style="left:140.4px;top:140.94px;font-size:17.25px;color:#444444;font-weight:700;transform:scaleX(0.7860);transform-origin:0 0;">B</div><div class="t" style="left:650.4px;top:104.65px;font-size:15.94px;color:#222;font-weight:400;transform:scaleX(0.8747);transform-origin:0 0;">General</div><div class="t" style="left:848px;top:133.80px;font-size:16.23px;color:#3b3a39;font-weight:400;transform:scaleX(0.9365);transform-origin:0 0;">Conditional</div><div class="t" style="left:843px;top:153.50px;font-size:16.23px;color:#3b3a39;font-weight:400;transform:scaleX(0.9159);transform-origin:0 0;">Formatting</div><div class="t" style="left:935.3px;top:133.80px;font-size:16.23px;color:#3b3a39;font-weight:400;transform:scaleX(0.8861);transform-origin:0 0;">Format as</div><div class="t" style="left:943px;top:153.50px;font-size:16.23px;color:#3b3a39;font-weight:400;transform:scaleX(0.8767);transform-origin:0 0;">Table</div><div class="t" style="left:1019px;top:133.80px;font-size:16.23px;color:#3b3a39;font-weight:400;transform:scaleX(0.8586);transform-origin:0 0;">Cell</div><div class="t" style="left:1005.4px;top:153.50px;font-size:16.23px;color:#3b3a39;font-weight:400;transform:scaleX(0.8512);transform-origin:0 0;">Styles</div><div class="t" style="left:1108px;top:92.36px;font-size:15.22px;color:#3b3a39;font-weight:400;transform:scaleX(0.9195);transform-origin:0 0;">Insert</div><div class="t" style="left:1108px;top:121.26px;font-size:15.22px;color:#3b3a39;font-weight:400;transform:scaleX(0.9909);transform-origin:0 0;">Delete</div><div class="t" style="left:1108px;top:150.16px;font-size:15.22px;color:#3b3a39;font-weight:400;transform:scaleX(0.9688);transform-origin:0 0;">Format</div><div class="t" style="left:1257.6px;top:89.32px;font-size:21.74px;color:#2f8ad6;font-weight:400;transform:scaleX(0.7862);transform-origin:0 0;">A</div><div class="t" style="left:1257.6px;top:106.52px;font-size:21.74px;color:#444;font-weight:400;transform:scaleX(0.8584);transform-origin:0 0;">Z</div><div class="t" style="left:1253.7px;top:133.50px;font-size:16.23px;color:#3b3a39;font-weight:400;transform:scaleX(0.9206);transform-origin:0 0;">Sort &amp;</div><div class="t" style="left:1251.4px;top:153.20px;font-size:16.23px;color:#3b3a39;font-weight:400;transform:scaleX(0.8766);transform-origin:0 0;">Filter</div><div class="t" style="left:1308px;top:133.50px;font-size:16.23px;color:#3b3a39;font-weight:400;transform:scaleX(0.9280);transform-origin:0 0;">Find &amp;</div><div class="t" style="left:1303.3px;top:153.20px;font-size:16.23px;color:#3b3a39;font-weight:400;transform:scaleX(0.8807);transform-origin:0 0;">Select</div><div class="t" style="left:1382.3px;top:133.50px;font-size:16.23px;color:#3b3a39;font-weight:400;transform:scaleX(0.8838);transform-origin:0 0;">Analyze</div><div class="t" style="left:1392.7px;top:153.20px;font-size:16.23px;color:#3b3a39;font-weight:400;transform:scaleX(0.8930);transform-origin:0 0;">Data</div><div class="t" style="left:1330.8px;top:54.63px;font-size:16.67px;color:#217346;font-weight:400;transform:scaleX(0.9403);transform-origin:0 0;-webkit-text-stroke:0.6px #217346;">Share</div><div class="t" style="left:1425.7px;top:54.63px;font-size:16.67px;color:#217346;font-weight:400;transform:scaleX(1.0220);transform-origin:0 0;-webkit-text-stroke:0.6px #217346;">Comments</div><div class="t" style="left:117.8px;top:621.14px;font-size:17.83px;color:#333;font-weight:400;transform:scaleX(0.9647);transform-origin:0 0;">Unit</div><div class="t" style="left:177px;top:621.14px;font-size:17.83px;color:#333;font-weight:400;transform:scaleX(0.9169);transform-origin:0 0;">Parameters</div><div class="t" style="left:288.6px;top:621.52px;font-size:17.39px;color:#217346;font-weight:400;transform:scaleX(0.9724);transform-origin:0 0;-webkit-text-stroke:0.7px #217346;">Code</div><div class="t" style="left:1480px;top:655.30px;font-size:13.77px;color:#666;font-weight:400;transform:scaleX(0.8518);transform-origin:0 0;">100%</div>
</body></html>
